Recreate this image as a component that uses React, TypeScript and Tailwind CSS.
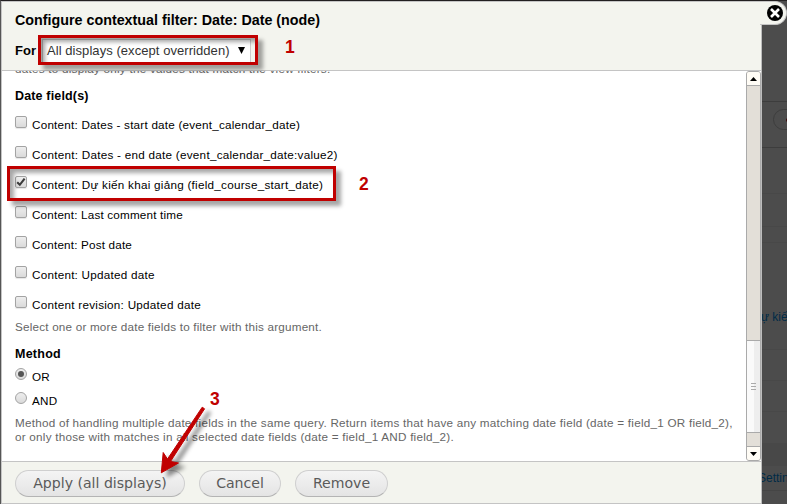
import React from 'react';

type Field = { label: string; checked?: boolean; tracking: string };

const fields: Field[] = [
  { label: 'Content: Dates - start date (event_calendar_date)', tracking: 'tracking-[0.22px]' },
  { label: 'Content: Dates - end date (event_calendar_date:value2)', tracking: 'tracking-[0.26px]' },
  { label: 'Content: Dự kiến khai giảng (field_course_start_date)', checked: true, tracking: 'tracking-[0.26px]' },
  { label: 'Content: Last comment time', tracking: 'tracking-[0.18px]' },
  { label: 'Content: Post date', tracking: 'tracking-[0.18px]' },
  { label: 'Content: Updated date', tracking: 'tracking-[0.24px]' },
  { label: 'Content revision: Updated date', tracking: 'tracking-[0.26px]' },
];

function Checkbox({ checked }: { checked?: boolean }) {
  return (
    <span className="mb-[6px] block h-[12px] w-[12px] shrink-0 rounded-[2px] border border-[#a3a3a3] bg-linear-to-b from-[#eeeeee] to-[#dadada] shadow-[0_1px_1px_rgba(0,0,0,0.1)]">
      {checked && (
        <svg className="block" width="10" height="10" viewBox="0 0 10 10">
          <path d="M1.2 5.3 L3.8 7.8 L8.6 1.6" fill="none" stroke="#3c3c3c" strokeWidth="2.1" />
        </svg>
      )}
    </span>
  );
}

function Radio({ label, on }: { label: string; on?: boolean }) {
  return (
    <div className="flex h-6 items-center">
      <span className="mb-[6px] flex h-[12px] w-[12px] shrink-0 items-center justify-center rounded-full border border-[#a3a3a3] bg-linear-to-b from-[#eeeeee] to-[#dadada]">
        {on && <span className="h-[6px] w-[6px] rounded-full bg-[#555]" />}
      </span>
      <span className="ml-[5px]">{label}</span>
    </div>
  );
}

function Backdrop() {
  return (
    <div className="relative h-full w-[25px] overflow-hidden bg-[#4c4c4c] text-[12px] text-[#002b47]">
      <div className="h-[102px] border-b border-[#3d3d3d]" />
      <div className="h-[46px] border-b border-[#3d3d3d] pt-[7px] pl-[11px]">
        <div className="flex h-[21px] w-[40px] items-center rounded-full border border-[#3d3d3d] pl-[12px]">
          <span className="h-[4px] w-[4px] rounded-full bg-[#3d0808]" />
        </div>
      </div>
      <div className="h-[46px] border-b border-[#484848]" />
      <div className="h-[33px] border-b border-[#484848]" />
      <div className="h-[16px] border-b border-[#484848]" />
      <div className="flex h-[107px] items-center border-b border-[#484848] pt-[42px] whitespace-nowrap"><span className="-ml-px">ự kiế</span></div>
      <div className="h-[31px] border-b border-[#484848]" />
      <div className="h-[31px] border-b border-[#484848]" />
      <div className="h-[31px]" />
      <div className="h-[23px] bg-[#484848]" />
      <div className="flex h-[25px] items-center border-b border-[#454545]"><span className="-ml-[4px]">Settin</span></div>
    </div>
  );
}

function PillButton({ children, width }: { children: string; width: string }) {
  return (
    <button className={`${width} h-[27px] rounded-full border border-[#cfcfcf] border-b-[#b4b4b4] bg-linear-to-b from-[#f4f4f4] to-[#e4e4e4] text-center font-['DejaVu_Sans',sans-serif] text-[14.1px] leading-[25px] whitespace-nowrap text-[#5a5a5a]`}>
      {children}
    </button>
  );
}

export default function App() {
  return (
    <div className="relative flex h-[504px] w-[787px] overflow-hidden bg-[#4c4c4c] font-['Liberation_Sans',Arial,sans-serif] text-[11.7px] text-black">
      <div className="flex w-[762px] shrink-0 flex-col border-t border-r border-l border-t-[#221f20] border-r-[#bdbdbd] border-l-[#555]">
        <header className="h-[70px] shrink-0 border-t border-b border-l border-[#c4c4c4] bg-[#f3f4ee] pl-[13px]">
          <h1 className="pt-[9px] text-[14.3px] leading-[19px] font-bold whitespace-nowrap">Configure contextual filter: Date: Date (node)</h1>
          <div className="mt-[8px] flex h-[26px] items-center">
            <span className="w-[27px] text-[13px] font-bold">For</span>
            <div className="flex h-[24px] w-[209px] items-center border border-[#ccc] bg-white pl-[4px] text-[13px] tracking-[0.06px] whitespace-nowrap text-[#333]">
              <span>All displays (except overridden)</span>
              <svg className="mb-[2px] ml-[8px]" width="7" height="7" viewBox="0 0 7 7"><path d="M0 0H7L3.5 7Z" fill="#000" /></svg>
            </div>
          </div>
        </header>

        <main className="flex h-[390px] shrink-0 overflow-hidden border-l border-[#c4c4c4] bg-white">
          <div className="w-[744px] shrink-0 overflow-hidden pl-[13px] tracking-[0.24px] whitespace-nowrap">
            <p className="-mt-[10px] h-[16px] leading-[16px] text-[#666]">dates to display only the values that match the view filters.</p>
            <h2 className="mt-[10px] h-[18px] text-[12.5px] leading-[18px] font-bold tracking-[0.16px]">Date field(s)</h2>
            <div className="mt-[5px]">
              {fields.map((f) => (
                <div key={f.label} className="flex h-[30px] items-center">
                  <Checkbox checked={f.checked} />
                  <span className={`${f.tracking} ml-[5px]`}>{f.label}</span>
                </div>
              ))}
            </div>
            <p className="h-[14px] leading-[14px] tracking-[0.2px] text-[#666]">Select one or more date fields to filter with this argument.</p>
            <h2 className="mt-[11px] h-[18px] text-[12.5px] leading-[18px] font-bold tracking-[0.25px]">Method</h2>
            <div className="mt-[2px]">
              <Radio label="OR" on />
              <Radio label="AND" />
            </div>
            <p className="mt-[3px] leading-[14px] text-[#666]">
              Method of handling multiple date fields in the same query. Return items that have any matching date field (date = field_1 OR field_2),
              <br />
              or only those with matches in all selected date fields (date = field_1 AND field_2).
            </p>
          </div>
          <div className="flex h-[390px] w-[15px] shrink-0 flex-col overflow-hidden rounded-[3px] border border-[#aaa] bg-[#e3dfd8]">
            <div className="flex h-[14px] shrink-0 items-center justify-center border-b border-[#aaa] bg-[#fffcf5]">
              <svg width="7" height="4" viewBox="0 0 7 4"><path d="M0 4L3.5 0L7 4Z" /></svg>
            </div>
            <div className="h-[254px] shrink-0" />
            <div className="flex h-[93px] shrink-0 flex-col items-center justify-center gap-[2px] border-y border-[#aaa] bg-linear-to-r from-[#fafafa] from-50% to-[#eee] to-50%">
              <i className="h-px w-[5px] bg-[#aaa]" />
              <i className="h-px w-[5px] bg-[#aaa]" />
              <i className="h-px w-[5px] bg-[#aaa]" />
            </div>
            <div className="h-[13px] shrink-0" />
            <div className="flex grow items-center justify-center border-t border-[#aaa] bg-[#fffcf5]">
              <svg width="7" height="4" viewBox="0 0 7 4"><path d="M0 0L3.5 4L7 0Z" /></svg>
            </div>
          </div>
        </main>

        <footer className="flex h-[43px] shrink-0 gap-[14px] border-t border-b border-l border-[#c4c4c4] bg-[#f3f4ee] pt-[8px] pl-[13px]">
          <PillButton width="w-[170px]">Apply (all displays)</PillButton>
          <PillButton width="w-[82px]">Cancel</PillButton>
          <PillButton width="w-[93px]">Remove</PillButton>
        </footer>
      </div>

      <Backdrop />

      {/* Close tab hanging off the dialog's top right corner */}
      <div className="absolute top-0 left-[761px] h-px w-[26px] bg-[#221f20]" />
      <div className="absolute top-px left-[760px] flex h-[24px] w-[27px] items-center rounded-r-[12px] border border-l-0 border-[#c4c4c4] bg-[#f3f4ee] pl-[7px]">
        <svg width="16" height="16" viewBox="0 0 16 16">
          <circle cx="8" cy="8" r="8" />
          <path d="M4 4L12 12M12 4L4 12" stroke="#fff" strokeWidth="2.6" />
        </svg>
      </div>

      {/* Step annotations */}
      <div className="absolute top-[35px] left-[38px] h-[30px] w-[220px] border-[3px] border-[#c00000] shadow-[5px_5px_4px_rgba(0,0,0,0.35),inset_4px_4px_4px_rgba(0,0,0,0.35)]" />
      <div className="absolute top-[166px] left-[7px] h-[35px] w-[329px] border-[3px] border-[#c00000] shadow-[5px_5px_4px_rgba(0,0,0,0.35),inset_4px_4px_4px_rgba(0,0,0,0.35)]" />
      <span className="absolute top-[37px] left-[285px] text-[17.5px] leading-[20px] font-bold text-[#c00000]">1</span>
      <span className="absolute top-[174px] left-[359px] text-[17.5px] leading-[20px] font-bold text-[#c00000]">2</span>
      <span className="absolute top-[389px] left-[210px] text-[17.5px] leading-[20px] font-bold text-[#c00000]">3</span>
      <svg className="absolute top-[400px] left-[150px] drop-shadow-[6px_4px_2px_rgba(0,0,0,0.45)]" width="70" height="80" viewBox="150 400 70 80">
        <path d="M202.2 407.2L204.6 408.8L170.5 461.5L178.5 463L161.3 472.8L163.2 452.5L167.5 459Z" fill="#c00000" stroke="#c00000" strokeWidth="1" />
      </svg>
    </div>
  );
}
